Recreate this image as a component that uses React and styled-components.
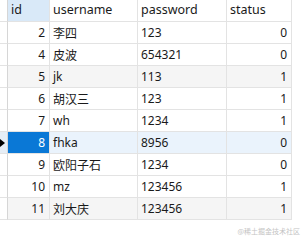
import React from 'react';
import styled, { createGlobalStyle } from 'styled-components';

const rows = [
  { id: 2, username: '李四', password: '123', status: 0 },
  { id: 4, username: '皮波', password: '654321', status: 0 },
  { id: 5, username: 'jk', password: '113', status: 1, alt: true },
  { id: 6, username: '胡汉三', password: '123', status: 1 },
  { id: 7, username: 'wh', password: '1234', status: 1 },
  { id: 8, username: 'fhka', password: '8956', status: 0, selected: true },
  { id: 9, username: '欧阳子石', password: '1234', status: 0 },
  { id: 10, username: 'mz', password: '123456', status: 1 },
  { id: 11, username: '刘大庆', password: '123456', status: 1, alt: true },
];

const GlobalStyle = createGlobalStyle`
  body {
    margin: 0;
    background: #fff;
    font-family: "Noto Sans", "Noto Sans CJK SC", sans-serif;
  }
`;

const Page = styled.div`
  width: 306px;
  height: 244px;
  display: flex;
  flex-direction: column;
  background: #fff;
`;

const Grid = styled.div`
  display: grid;
  grid-template-columns: 8px 42px 88px 89px 65px;
  grid-auto-rows: 22px;
  width: 292px;
  font-size: 12px;
  color: #1a1a1a;
`;

const Cell = styled.div`
  box-sizing: border-box;
  border-right: 1px solid #e3e3e3;
  border-bottom: 1px solid #e3e3e3;
  display: flex;
  align-items: center;
  justify-content: ${p => (p.$num ? 'flex-end' : 'flex-start')};
  padding: ${p => (p.$num ? '0 4px 0 0' : '0 0 0 3px')};
  background: ${p => (p.$active ? '#0a78d6' : p.$sel ? '#eaf3fc' : p.$alt ? '#f5f5f5' : '#fff')};
  color: ${p => (p.$active ? '#fff' : '#1a1a1a')};
  white-space: nowrap;
  overflow: hidden;
`;

const HeadCell = styled(Cell)`
  padding: 0 0 2px 3px;
  background: ${p => (p.$sorted ? '#d9e9f8' : '#fff')};
  font-size: 12.5px;
`;

const Gutter = styled.div`
  box-sizing: border-box;
  border-right: 1px solid #d6d6d6;
  border-bottom: 1px solid #e3e3e3;
  display: flex;
  align-items: center;
  background: ${p => (p.$sel ? '#e6eef6' : '#fff')};
`;

const Arrow = styled.span`
  width: 0;
  height: 0;
  border-top: 4px solid transparent;
  border-bottom: 4px solid transparent;
  border-left: 5px solid #000;
`;

const Footer = styled.div`
  display: flex;
  justify-content: flex-end;
  padding: 6px 6px 0 0;
  font-size: 7px;
  color: #c4c4c4;
  font-family: "Noto Sans CJK SC", sans-serif;
`;

export default function App() {
  return (
    <Page>
      <GlobalStyle />
      <Grid>
        <Gutter />
        <HeadCell $sorted>id</HeadCell>
        <HeadCell>username</HeadCell>
        <HeadCell>password</HeadCell>
        <HeadCell>status</HeadCell>
        {rows.map(r => (
          <React.Fragment key={r.id}>
            <Gutter $sel={r.selected}>{r.selected && <Arrow />}</Gutter>
            <Cell $num $active={r.selected} $alt={r.alt}>{r.id}</Cell>
            <Cell $sel={r.selected} $alt={r.alt}>{r.username}</Cell>
            <Cell $sel={r.selected} $alt={r.alt}>{r.password}</Cell>
            <Cell $num $sel={r.selected} $alt={r.alt}>{r.status}</Cell>
          </React.Fragment>
        ))}
      </Grid>
      <Footer>@稀土掘金技术社区</Footer>
    </Page>
  );
}
